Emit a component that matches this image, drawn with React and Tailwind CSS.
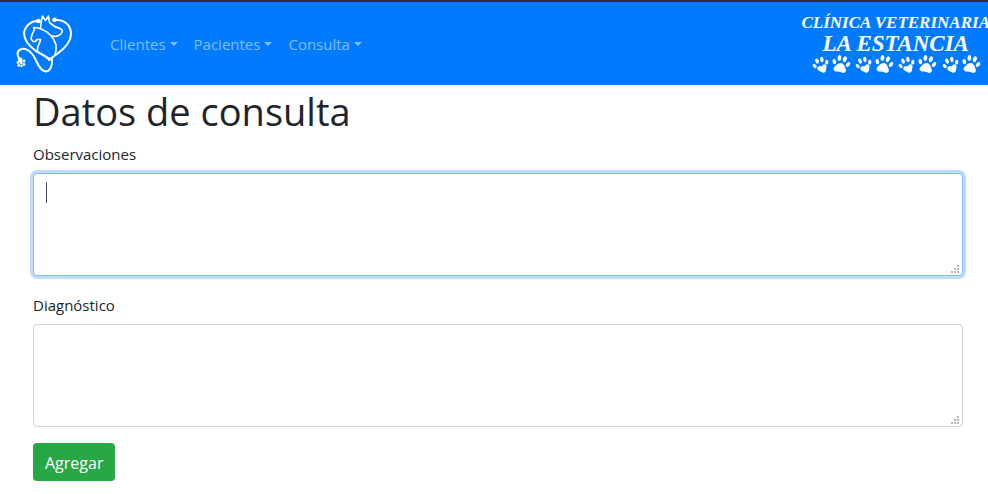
import React from "react";

const menus = ["Clientes", "Pacientes", "Consulta"];

function Logo() {
  return (
    <svg viewBox="14 13 62 62" className="h-[62px] w-[62px]" fill="none" stroke="white" strokeLinecap="round" strokeLinejoin="round" aria-hidden="true">
      <path strokeWidth="2" d="M38 21C31 20.500 25 26 24 33C24 41 29 46 36 51C41 54 46 56 49 59.500" />
      <path strokeWidth="2" d="M55 20C64 19 71 25 71 34C71 43 64 49 57 54C53 57 50 59 49 60" />
      <path strokeWidth="2" d="M36 51L49 58.500L52 59.500C52.500 66 50 71.500 45.500 71.500C39 70.500 37 61 33 55C29 50 25 47.500 20.500 49.500C17 51 16.500 55 19.500 59" />
      <path strokeWidth="1.6" d="M40.500 28L41.500 20L42.500 16L45.500 20.500L48.500 16L49.500 22.500L54 26C57 28 60 27.500 62 30C63 31.500 61.500 34.500 58.500 35.500C56 37 53.500 36.500 51.500 35.500" />
      <path strokeWidth="1.6" d="M41 29L38 28L33.500 27.500L34.500 29.500L32 34.500L31 39L33 41.500L35.500 41.500L37 39.500L40.500 39.500C40.500 43 37 45 37.500 50" />
      <path strokeWidth="1.6" d="M41 29C47 31 54 37 56 45C56.500 49 56 52 55 55" />
      <g fill="white" stroke="none">
        <circle cx="38.500" cy="21" r="2.300" />
        <circle cx="54.500" cy="19.800" r="2.300" />
        <circle cx="20.300" cy="60" r="2.400" />
        <circle cx="18" cy="62.500" r="1.400" />
        <circle cx="24" cy="61" r="1.400" />
        <circle cx="18.800" cy="65.300" r="1.400" />
        <circle cx="24" cy="64.500" r="1.400" />
        <circle cx="21.300" cy="63" r="1.400" />
        <circle cx="21.500" cy="66" r="1.200" />
      </g>
    </svg>
  );
}

const roundPad = "M0-1C3-1 4.200 2 5.600 4C7.200 6.500 5.500 8.800 2.500 8.200C.8 7.800-.8 7.800-2.500 8.200C-5.500 8.800-7.200 6.500-5.600 4C-4.200 2-3-1 0-1Z";
const pointedPad = "M-4.500 1.500C-2.500-.5-1 1.500 0 1.500C1 1.500 3-1 5 1C6.500 3 4.500 5 3.500 7C2.500 9.500 0 10 -1.500 8C-3 6-7 4.500-4.500 1.500Z";

function Paw({ x, y, angle, size, pad }) {
  return (
    <g transform={`translate(${x} ${y}) rotate(${angle}) scale(${size})`}>
      <ellipse cx="-7" cy="-1" rx="1.800" ry="2.700" transform="rotate(-25 -7 -1)" />
      <ellipse cx="-2.800" cy="-5.500" rx="1.900" ry="3" transform="rotate(-8 -2.800 -5.500)" />
      <ellipse cx="2.800" cy="-5.500" rx="1.900" ry="3" transform="rotate(8 2.800 -5.500)" />
      <ellipse cx="7" cy="-1" rx="1.800" ry="2.700" transform="rotate(25 7 -1)" />
      <path d={pad} />
    </g>
  );
}

function Paws() {
  return (
    <svg viewBox="0 0 170 20" className="h-5 w-[170px]" fill="white" aria-hidden="true">
      {[0, 43, 86, 130].map((x) => (
        <React.Fragment key={x}>
          <Paw x={x + 10} y={10} angle={-18} size={0.9} pad={pointedPad} />
          <Paw x={x + 30} y={9} angle={12} size={1} pad={roundPad} />
        </React.Fragment>
      ))}
    </svg>
  );
}

function Field({ id, label, focused }) {
  return (
    <div className="mb-4">
      <label htmlFor={id} className="mb-[7px] block pt-px">{label}</label>
      <div className="relative">
        <textarea
          id={id}
          autoFocus={focused}
          className="block h-[103px] w-full resize-none rounded border border-[#ced4da] bg-white px-3 py-1.5 caret-transparent outline-none focus:border-[#80bdff] focus:ring-3 focus:ring-[#bfdeff]"
        />
        {focused && <span className="absolute top-[9px] left-[13px] h-[21px] w-px bg-[#495057]" />}
        <svg viewBox="0 0 8 8" className="pointer-events-none absolute right-1 bottom-[3px] h-2 w-2" fill="#b8b8b8" shapeRendering="crispEdges" aria-hidden="true">
          <path d="M6 0h2v2h-2zM3 3h2v2h-2zM6 3h2v2h-2zM0 6h2v2h-2zM3 6h2v2h-2zM6 6h2v2h-2z" />
        </svg>
      </div>
    </div>
  );
}

export default function App() {
  return (
    <div className="overflow-x-hidden bg-white font-['Open_Sans','Noto_Sans',sans-serif] text-[15px] leading-6 text-[#212529]">
      <header className="flex h-[85px] items-center border-t-2 border-[#292c30] bg-[#007bff] pl-[14px]">
        <a href="#" aria-label="Inicio"><Logo /></a>
        <nav className="ml-[34px] flex gap-4">
          {menus.map((name) => (
            <button key={name} type="button" className="flex items-center gap-1 text-white/50">
              {name}
              <span className="border-x-4 border-t-4 border-x-transparent border-t-current" />
            </button>
          ))}
        </nav>
        <div className="-mr-0.5 ml-auto flex shrink-0 flex-col items-center font-['Liberation_Serif',serif] whitespace-nowrap text-white italic">
          <span className="text-[17px] leading-5 font-bold">CLÍNICA VETERINARIA</span>
          <span className="text-[23px] leading-[22px] font-bold">LA ESTANCIA</span>
          <Paws />
        </div>
      </header>
      <main className="pr-[25px] pl-[33px]">
        <h1 className="mb-[7px] pt-[3px] text-[38px] leading-[46px]">Datos de consulta</h1>
        <form onSubmit={(event) => event.preventDefault()}>
          <Field id="observaciones" label="Observaciones" focused />
          <Field id="diagnostico" label="Diagnóstico" />
          <button type="submit" className="rounded bg-[#28a745] px-3 pt-2 pb-1.5 text-base text-white">Agregar</button>
        </form>
      </main>
    </div>
  );
}
